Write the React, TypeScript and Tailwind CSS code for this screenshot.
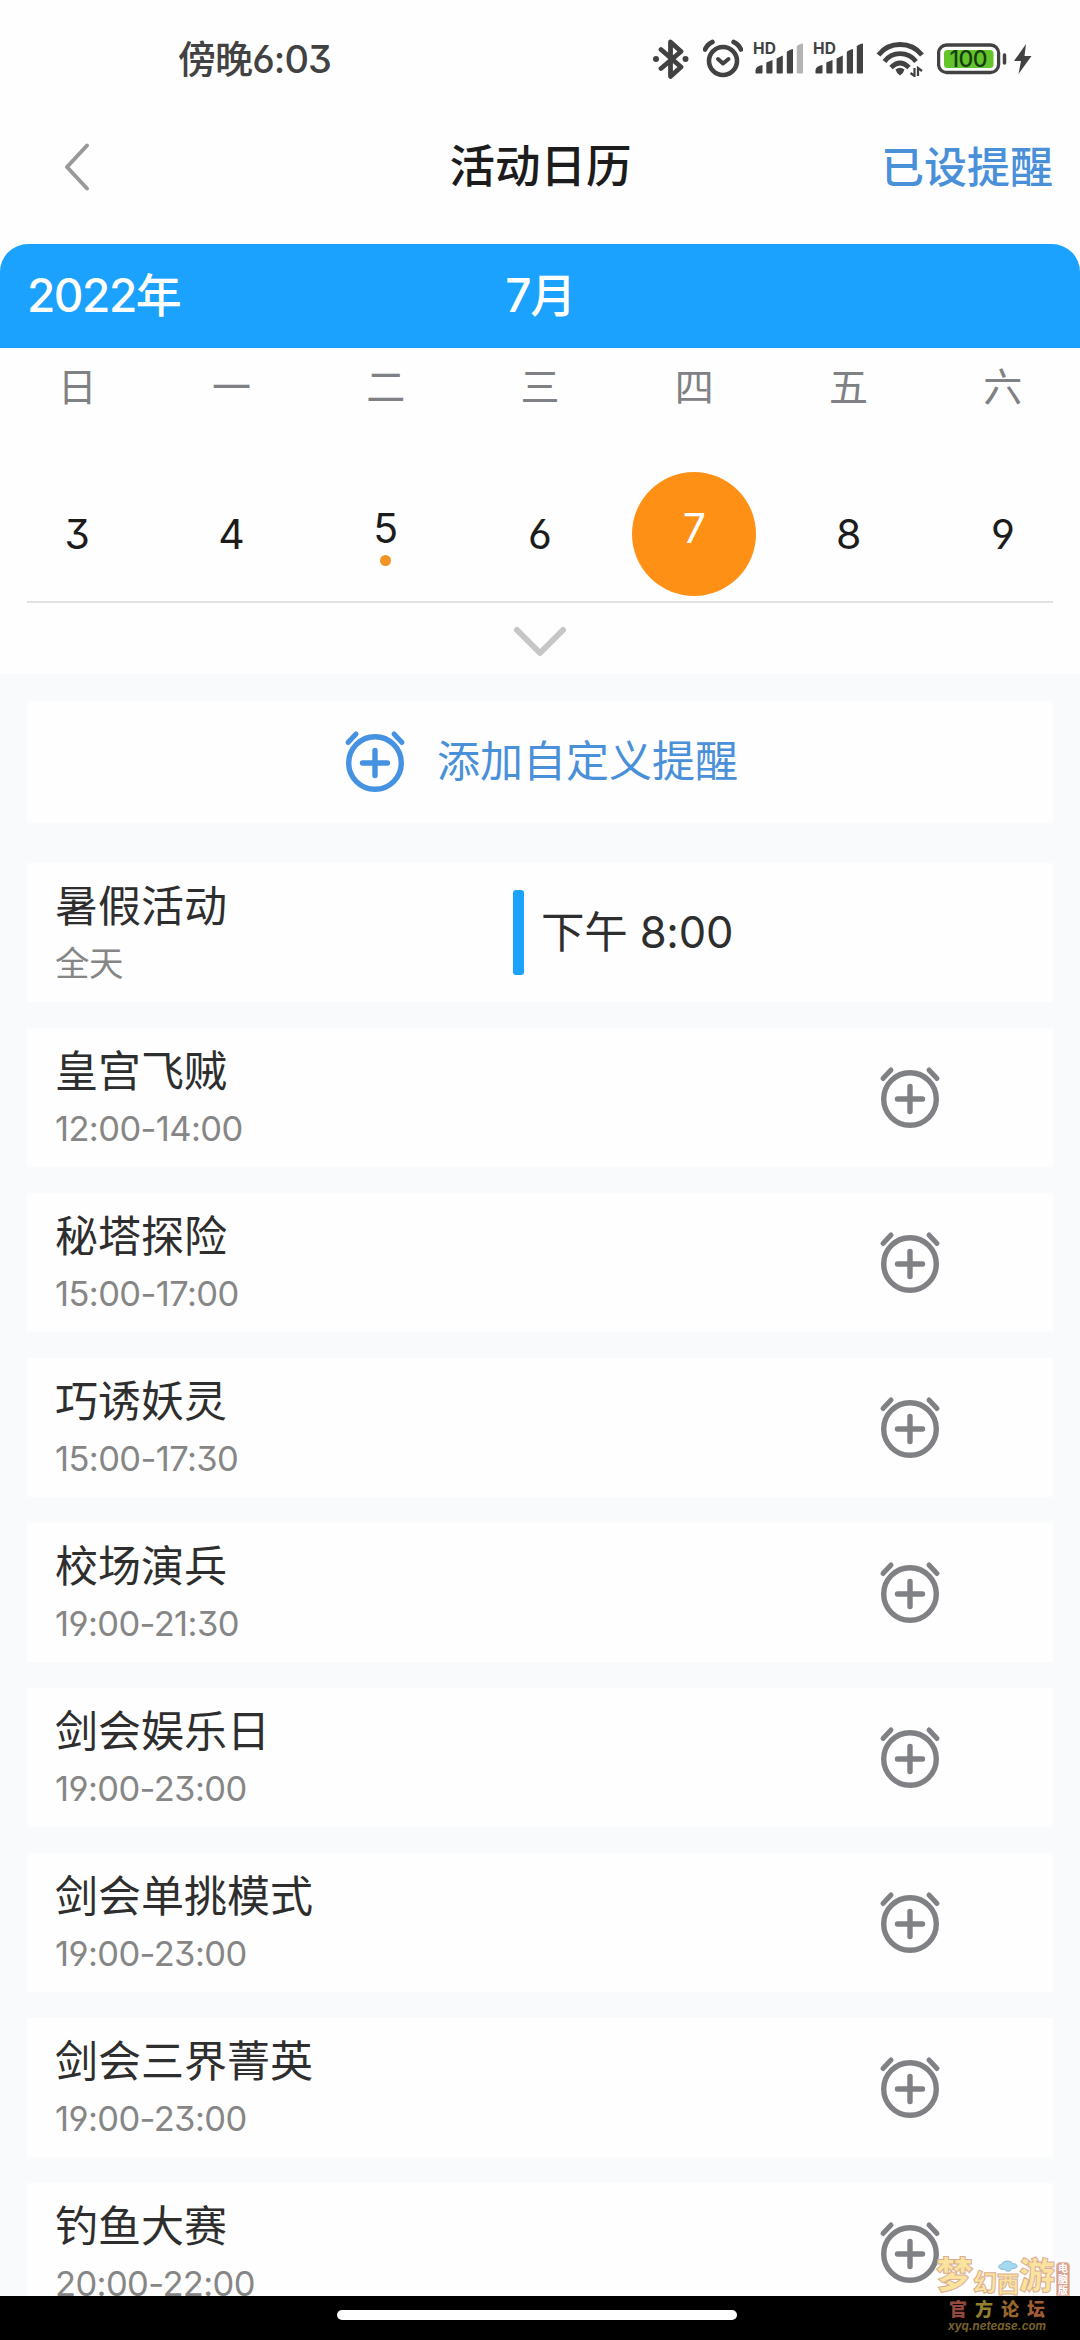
import React from "react";

const weekdays = ["日", "一", "二", "三", "四", "五", "六"];

const dates = [
  { day: 3 },
  { day: 4 },
  { day: 5, dot: true },
  { day: 6 },
  { day: 7, selected: true },
  { day: 8 },
  { day: 9 },
];

const events = [
  { title: "暑假活动", time: "全天", reminder: "下午 8:00" },
  { title: "皇宫飞贼", time: "12:00-14:00" },
  { title: "秘塔探险", time: "15:00-17:00" },
  { title: "巧诱妖灵", time: "15:00-17:30" },
  { title: "校场演兵", time: "19:00-21:30" },
  { title: "剑会娱乐日", time: "19:00-23:00" },
  { title: "剑会单挑模式", time: "19:00-23:00" },
  { title: "剑会三界菁英", time: "19:00-23:00" },
  { title: "钓鱼大赛", time: "20:00-22:00" },
];

function AlarmPlus({ className }: { className: string }) {
  return (
    <svg viewBox="0 0 64 64" fill="none" stroke="currentColor" strokeLinecap="round" className={className}>
      <circle cx="32" cy="33" r="26.3" strokeWidth="5.4" />
      <path d="M32 20.500v25M19.500 33h25" strokeWidth="5.400" />
      <path d="M5 12.500l8-8.500M59 12.500l-8-8.500" strokeWidth="5" />
    </svg>
  );
}

function Signal({ faded }: { faded?: boolean }) {
  return (
    <svg viewBox="0 0 52 44" className="h-11 w-[52px]" fill="#424242">
      <text x="0" y="17" fontSize="15.500" fontWeight="700" fontFamily="Inter, sans-serif" textLength="23">
        HD
      </text>
      <g transform="translate(0 4)">
        <path d="M2.500 32v-2.500q0-4.500 7-5.500v7.500q0 1-1 1h-5q-1 0-1-.5z" />
        <path d="M13.300 31.500v-10l6.200-2.500v12.500q0 1-1 1h-4.200q-1 0-1-1z" />
        <path d="M23.600 31.500v-14l6.200-3v17q0 1-1 1h-4.200q-1 0-1-1z" />
        <path d="M33.800 31.500v-20q0-2 6.200-3.500v23.500q0 1-1 1h-4.200q-1 0-1-1z" />
        <path d="M43.800 31.500v-26q1-2 6.200-3v29q0 1-1 1h-4.200q-1 0-1-1z" fill={faded ? "#b4b4b4" : "#424242"} />
      </g>
    </svg>
  );
}

function StatusBar() {
  return (
    <div className="flex h-[118px] items-center pl-[178px] pr-[48px] text-[#424242]">
      <span className="flex-1 text-[38px] font-medium leading-[54px] tracking-[-0.900px]">傍晚6:03</span>
      <div className="flex items-center">
        <svg viewBox="0 0 36 40" className="mr-[14px] h-10 w-9" fill="none" stroke="currentColor" strokeWidth="4.800" strokeLinejoin="round" strokeLinecap="round">
          <path d="M8 10.500l20 17.500-10.500 9.500V3l10.500 9.500L8 29.500" />
          <path d="M3 20h.01M32.500 20h.01" strokeWidth="6" />
        </svg>
        <svg viewBox="0 0 40 40" className="mr-[10px] h-10 w-10" fill="none" stroke="currentColor" strokeLinecap="round" strokeLinejoin="round">
          <circle cx="20" cy="22" r="14" strokeWidth="4.600" />
          <path d="M15 20l5 4.500 5.500-4.500" strokeWidth="4" />
          <path d="M2 10.500q2.500-5.500 7.500-7.500M38 10.500q-2.500-5.500-7.500-7.500" strokeWidth="4.600" />
        </svg>
        <div className="mr-[8px] flex">
          <Signal faded />
        </div>
        <div className="mr-[11px] flex">
          <Signal />
        </div>
        <svg viewBox="0 0 48 36" className="mr-[13px] h-9 w-12" fill="none" stroke="#424242">
          <path d="M2.500 14C13 0 35 0 46 14" strokeWidth="4.800" />
          <path d="M8.500 20.500C16 10 32 10 40 20.500" strokeWidth="4.800" />
          <path d="M15 26.500Q24 17.500 33 26.500" strokeWidth="4.600" />
          <path d="M19.500 28.500q4.500-3.500 9 0-1 4-4.500 6-3.500-2-4.500-6z" fill="#424242" stroke="none" />
          <path d="M38.500 27v8l-4-3M42 35v-8l4 3" strokeWidth="2.200" />
        </svg>
        <svg viewBox="0 0 70 32" className="mr-[6px] h-8 w-[70px]">
          <rect x="1.600" y="2" width="60" height="27.500" rx="8" fill="white" stroke="#424242" strokeWidth="3.300" />
          <rect x="7" y="7" width="49.500" height="18" rx="3.500" fill="#63c52b" />
          <path d="M67.500 12v8" stroke="#424242" strokeWidth="3.500" strokeLinecap="round" />
          <text x="31.500" y="24" textAnchor="middle" fontSize="23" fontWeight="500" fontFamily="Inter, sans-serif" textLength="38" fill="#173d10">
            100
          </text>
        </svg>
        <svg viewBox="0 0 19 32" className="h-8 w-[19px]" fill="#424242">
          <path d="M13 1L1 18h7L5.500 31 18.500 13h-7z" />
        </svg>
      </div>
    </div>
  );
}

function Watermark() {
  return (
    <div className="absolute bottom-0 right-[10px] flex h-[86px] w-[136px] flex-col items-center">
      <div className="flex h-[42px] w-full items-end justify-end">
        <div className="flex items-end font-black text-[#fae39c] [-webkit-text-stroke:1px_#dcae94]">
          <span className="w-[37px] text-[37px] leading-[40px]">梦</span>
          <span className="w-[24px] text-[24px] leading-[26px]">幻</span>
          <div className="flex w-[22px] flex-col items-center">
            <svg viewBox="0 0 24 14" className="h-[13px] w-[22px]" fill="#a5d9ee" stroke="#84b9d2" strokeWidth="1">
              <path d="M2 8q-1-3 3-3 1-4 6-4 5-.5 6 3 5-.5 5 3-1 3-6 2-1 4-5 3-2 0-3-2-5 1-6-2z" />
            </svg>
            <span className="text-[22px] leading-[23px]">西</span>
          </div>
          <span className="w-[36px] text-[36px] leading-[39px]">游</span>
        </div>
        <div className="ml-[1px] flex h-[34px] w-[14px] flex-col items-center rounded-t border border-[#e0bfb0] bg-[#d9a08c] text-[10px] font-bold leading-[11px] text-white">
          <span>电</span>
          <span>脑</span>
          <span>版</span>
        </div>
      </div>
      <div className="mr-[10px] mt-[4px] flex gap-[8px] text-[18px] font-black leading-[19px]">
        <span className="text-[#94493d]">官</span>
        <span className="text-[#94802c]">方</span>
        <span className="text-[#96662b]">论</span>
        <span className="text-[#a05c35]">坛</span>
      </div>
      <span className="mr-[10px] text-[11.500px] font-bold italic leading-[15px] text-[#77602a]">xyq.netease.com</span>
    </div>
  );
}

export default function App() {
  return (
    <div className="relative flex h-[2340px] w-[1080px] flex-col overflow-hidden bg-[#fefefe] font-[Inter,'Noto_Sans_CJK_SC',sans-serif] [font-feature-settings:'cv03','cv04','cv09']">
      <StatusBar />

      <header className="grid h-[126px] grid-cols-3 items-center pb-[28px] pl-[62px] pr-[27px]">
        <svg viewBox="0 0 28 50" className="h-[50px] w-7" fill="none" stroke="#999999" strokeWidth="4" strokeLinecap="round" strokeLinejoin="round">
          <path d="M25 3.500L5 25l20 21.500" />
        </svg>
        <h1 className="-ml-[34px] text-center text-[45.500px] font-medium leading-none text-[#1c1c1c]">活动日历</h1>
        <span className="text-right text-[43px] font-medium leading-none text-[#4a90d9]">已设提醒</span>
      </header>

      <div className="grid h-[104px] grid-cols-3 items-center rounded-t-[28px] bg-[#1ba1fe] px-[27px] pb-[2px] text-[46px] font-medium leading-none tracking-[-1.500px] text-white">
        <span>2022年</span>
        <span className="text-center">7月</span>
      </div>

      <div className="grid h-[78px] grid-cols-7 items-center pb-[2px] text-center text-[39px] leading-none text-[#808184]">
        {weekdays.map((d) => (
          <span key={d}>{d}</span>
        ))}
      </div>

      <div className="mx-[27px] border-b-2 border-[#e2e2e2]">
        <div className="-mx-[27px] grid h-[175px] grid-cols-7 justify-items-center pt-[46px] text-[41px] leading-none text-[#1c1c1c]">
          {dates.map((d) => (
            <div
              key={d.day}
              className={
                d.selected
                  ? "flex size-[124px] flex-col items-center rounded-full bg-[#fe9016] pt-[36px] text-white"
                  : d.dot
                    ? "flex size-[124px] flex-col items-center pt-[36px]"
                    : "flex size-[124px] flex-col items-center pt-[42px]"
              }
            >
              <span>{d.day}</span>
              {d.dot && <span className="mt-[6px] size-[11px] rounded-full bg-[#f29423]" />}
            </div>
          ))}
        </div>
      </div>

      <div className="flex h-[71px] shrink-0 justify-center pt-[22px]">
        <svg viewBox="0 0 56 34" className="h-[34px] w-14" fill="none" stroke="#c6c6c6" strokeWidth="6" strokeLinecap="round" strokeLinejoin="round">
          <path d="M5 5l23 23 23-23" />
        </svg>
      </div>

      <main className="h-[1622px] shrink-0 overflow-hidden bg-[#f8fafc] px-[27px] pt-[27px]">
        <button className="flex h-[122px] w-full items-center bg-[#fefefe] pl-[316px] text-[43px] leading-none text-[#4a90d9]">
          <AlarmPlus className="size-16 text-[#4592e2]" />
          <span className="ml-[30px] pb-[2px]">添加自定义提醒</span>
        </button>

        <ul className="mt-[40px] flex flex-col gap-[26px]">
          {events.map((e) => (
            <li key={e.title} className="flex h-[139px] shrink-0 items-center bg-[#fefefe]">
              <div className="flex h-full w-[486px] flex-col pl-[28px] pt-[22px]">
                <span className="text-[43px] leading-[43px] text-[#2e2e2e]">{e.title}</span>
                <span className="mt-[18px] text-[34.500px] leading-[36px] tracking-[-0.600px] text-[#868686]">{e.time}</span>
              </div>
              {e.reminder ? (
                <div className="flex items-center">
                  <div className="h-[85px] w-[11px] rounded-[3px] bg-[#1ba1fe]" />
                  <span className="ml-[17px] text-[43.500px] leading-none tracking-[-0.200px] text-[#2e2e2e]">{e.reminder}</span>
                </div>
              ) : (
                <AlarmPlus className="ml-[365px] size-16 text-[#808184]" />
              )}
            </li>
          ))}
        </ul>
      </main>

      <footer className="flex h-[44px] shrink-0 justify-center bg-black pr-[6px] pt-[14px]">
        <div className="h-[10px] w-[400px] rounded-full bg-white" />
      </footer>

      <Watermark />
    </div>
  );
}
